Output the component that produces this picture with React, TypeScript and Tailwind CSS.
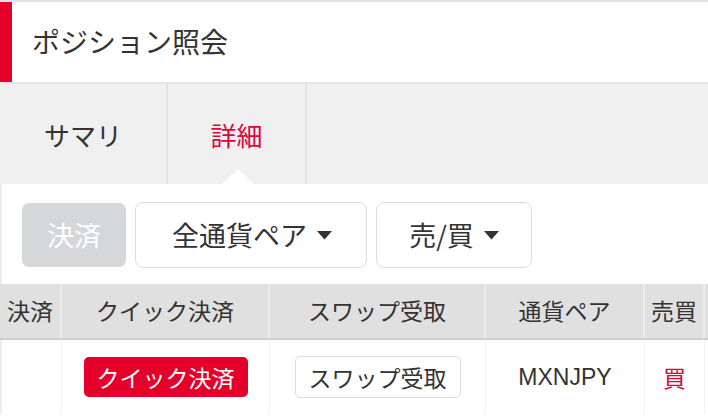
const jp = { fontFamily: '"Noto Sans CJK JP", "Noto Sans", sans-serif' };

function Caret() {
  return (
    <svg width="15" height="10" viewBox="0 0 15 10" className="ml-[10px] inline-block">
      <path d="M0 1 L15 1 L7.5 9.5 Z" fill="#333" />
    </svg>
  );
}

const cols = [
  { label: "決済", w: "w-[62px]" },
  { label: "クイック決済", w: "w-[208px]" },
  { label: "スワップ受取", w: "w-[216px]" },
  { label: "通貨ペア", w: "w-[159px]" },
  { label: "売買", w: "w-[60px]" },
  { label: "", w: "w-[60px]" },
];

export default function App() {
  return (
    <div className="h-[416px] w-[708px] overflow-hidden bg-white text-[#333]" style={jp}>
      <div className="h-[2px] bg-[#dfe4ea]" />
      <header className="flex h-[80px] items-center border-l-[12px] border-[#e4002b] bg-white pb-[2px] pl-[20px]">
        <h1 className="text-[28px] leading-none text-[#333]">ポジション照会</h1>
      </header>
      <div className="h-[2px] bg-[#e3e5e8]" />

      <nav className="flex h-[100px] bg-[#f0f0f0]">
        <div className="flex w-[168px] items-center justify-center border-r-2 border-[#e4e4e4] text-[26px] text-[#333]">
          サマリ
        </div>
        <div className="relative flex w-[139px] items-center justify-center border-r-2 border-[#e4e4e4] text-[26px] text-[#d9073a]">
          詳細
          <span className="absolute bottom-0 left-[54px] h-0 w-0 border-x-[16px] border-b-[15px] border-x-transparent border-b-white" />
        </div>
      </nav>

      <div className="flex h-[100px] items-center gap-[9px] border-l-2 border-[#ececec] pl-[20px] pt-[2px]">
        <button className="flex h-[64px] w-[104px] items-center justify-center rounded-[7px] bg-[#d6d7d8] text-[27px] text-white">
          決済
        </button>
        <button className="flex h-[66px] w-[232px] items-center justify-center rounded-[8px] border border-[#dcdcdc] bg-white pl-[2px] text-[27px] text-[#333]">
          全通貨ペア
          <Caret />
        </button>
        <button className="flex h-[66px] w-[156px] items-center justify-center rounded-[8px] border border-[#dcdcdc] bg-white text-[27px] text-[#333]">
          売/買
          <Caret />
        </button>
      </div>

      <div className="flex h-[56px] border-b-2 border-[#cfcfcf] bg-[#e0e0e0]">
        {cols.map((c, i) => (
          <div
            key={i}
            className={`${c.w} flex shrink-0 items-center justify-center border-r-2 border-[#ececec] pb-[2px] text-[23px] text-[#333]`}
          >
            {c.label}
          </div>
        ))}
      </div>

      <div className="flex h-[74px] border-l-2 border-[#ececec]">
        <div className="w-[60px] shrink-0 border-r border-[#f2f2f2]" />
        <div className="flex w-[208px] shrink-0 items-center justify-center border-r border-[#f2f2f2]">
          <span className="flex h-[40px] w-[164px] items-center justify-center rounded-[5px] bg-[#e4002b] text-[23px] text-white">
            クイック決済
          </span>
        </div>
        <div className="flex w-[216px] shrink-0 items-center justify-center border-r border-[#f2f2f2]">
          <span className="flex h-[42px] w-[166px] items-center justify-center rounded-[5px] border border-[#dcdcdc] text-[23px] text-[#333]">
            スワップ受取
          </span>
        </div>
        <div
          className="flex w-[159px] shrink-0 items-center justify-center border-r border-[#f2f2f2] text-[23px] text-[#333]"
          style={{ fontFamily: '"Liberation Sans", Arial, sans-serif' }}
        >
          MXNJPY
        </div>
        <div className="flex w-[60px] shrink-0 items-center justify-center border-r border-[#f2f2f2] text-[23px] text-[#d9073a]">
          買
        </div>
      </div>
    </div>
  );
}
